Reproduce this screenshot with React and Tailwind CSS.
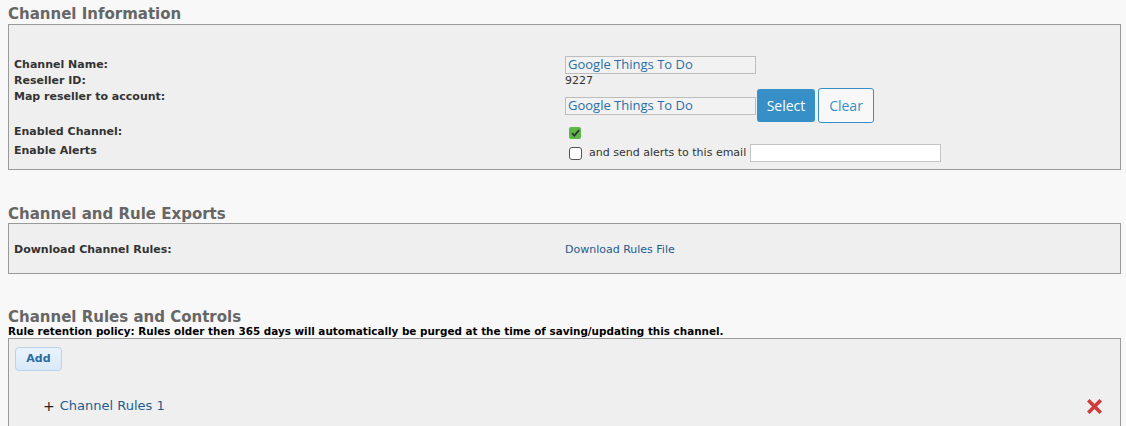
export default function App() {
  const label = "text-[11px] font-bold text-[#333]";
  const box = "ml-[8px] mr-[5px] border border-[#9a9a9a] bg-[#efefef]";
  const heading = "px-[8px] text-[15px] font-bold text-[#666] leading-[18px]";
  const field =
    "h-[18px] w-[191px] border border-[#bdbdbd] bg-[#f2f2f2] px-[2px] font-['Open_Sans',sans-serif] text-[13px] text-[#2a6ea8] outline-none";

  return (
    <div className="h-screen w-full bg-[#f8f8f8] font-['DejaVu_Sans',Verdana,sans-serif] overflow-hidden">
      {/* Channel Information */}
      <div className="pt-[5px] h-[24px]">
        <h2 className={heading}>Channel Information</h2>
      </div>
      <div className={`${box} h-[146px] pt-[31px] px-[5px]`}>
        <div className="flex h-[18px] items-center">
          <div className={`w-[551px] ${label}`}>Channel Name:</div>
          <input readOnly value="Google Things To Do" className={field} />
        </div>
        <div className="flex h-[14px] items-center">
          <div className={`w-[551px] ${label}`}>Reseller ID:</div>
          <div className="text-[11px] text-[#333]">9227</div>
        </div>
        <div className="flex h-[35px] items-center">
          <div className={`w-[551px] self-start pt-[1px] ${label}`}>Map reseller to account:</div>
          <input readOnly value="Google Things To Do" className={field} />
          <button className="ml-[1px] h-[33px] w-[58px] rounded-[3px] bg-[#378fc8] font-['Open_Sans',sans-serif] text-[14px] text-white">
            Select
          </button>
          <button className="ml-[3px] h-[35px] w-[56px] rounded-[3px] border border-[#378fc8] bg-[#f8f8f8] font-['Open_Sans',sans-serif] text-[14px] text-[#378fc8]">
            Clear
          </button>
        </div>
        <div className="flex h-[18px] items-center">
          <div className={`w-[551px] ${label}`}>Enabled Channel:</div>
          <div className="ml-[4px] mt-[2px] flex h-[12px] w-[12px] items-center justify-center rounded-[2px] bg-[#5cb845]">
            <svg width="9" height="8" viewBox="0 0 9 8">
              <path d="M1 4.2 L3.4 6.6 L8 1.2" fill="none" stroke="#333" strokeWidth="1.8" />
            </svg>
          </div>
        </div>
        <div className="flex h-[24px] items-center">
          <div className={`w-[551px] self-start pt-[2px] ${label}`}>Enable Alerts</div>
          <div className="ml-[4px] h-[13px] w-[13px] rounded-[3px] border border-[#555] bg-white" />
          <span className="ml-[7px] text-[11px] text-[#333]">and send alerts to this email</span>
          <input className="ml-[4px] h-[18px] w-[191px] border border-[#c4c4c4] bg-white outline-none" />
        </div>
      </div>

      {/* Channel and Rule Exports */}
      <div className="pt-[35px] h-[53px]">
        <h2 className={heading}>Channel and Rule Exports</h2>
      </div>
      <div className={`${box} flex h-[51px] items-center px-[5px] pt-[3px]`}>
        <div className={`w-[551px] ${label}`}>Download Channel Rules:</div>
        <a className="text-[11px] text-[#1f5c8e]">Download Rules File</a>
      </div>

      {/* Channel Rules and Controls */}
      <div className="pt-[35px]">
        <h2 className="px-[8px] text-[15px] font-bold leading-[16px] text-[#666]">Channel Rules and Controls</h2>
        <div className="px-[8px] text-[10.4px] font-bold leading-[12px] text-black">
          Rule retention policy: Rules older then 365 days will automatically be purged at the time of saving/updating this channel.
        </div>
      </div>
      <div className={`${box} mt-[1px] h-[120px] px-[6px] pt-[6px]`}>
        <button className="h-[24px] w-[47px] rounded-[4px] border border-[#b7d3ee] bg-gradient-to-b from-[#eaf3fc] to-[#d9e9f8] text-[11px] font-bold text-[#2a6ca6]">
          Add
        </button>
        <div className="mt-[25px] flex items-center pl-[28px] pr-[12px]">
          <span className="text-[14px] leading-none text-[#222]">+</span>
          <span className="ml-[5px] text-[13px] text-[#1f5c8e]">Channel Rules 1</span>
          <svg className="ml-auto" width="15" height="15" viewBox="0 0 15 15">
            <path d="M2.5 2.5 L12.5 12.5 M12.5 2.5 L2.5 12.5" stroke="#d13b3b" strokeWidth="3.6" strokeLinecap="square" />
          </svg>
        </div>
      </div>
    </div>
  );
}
